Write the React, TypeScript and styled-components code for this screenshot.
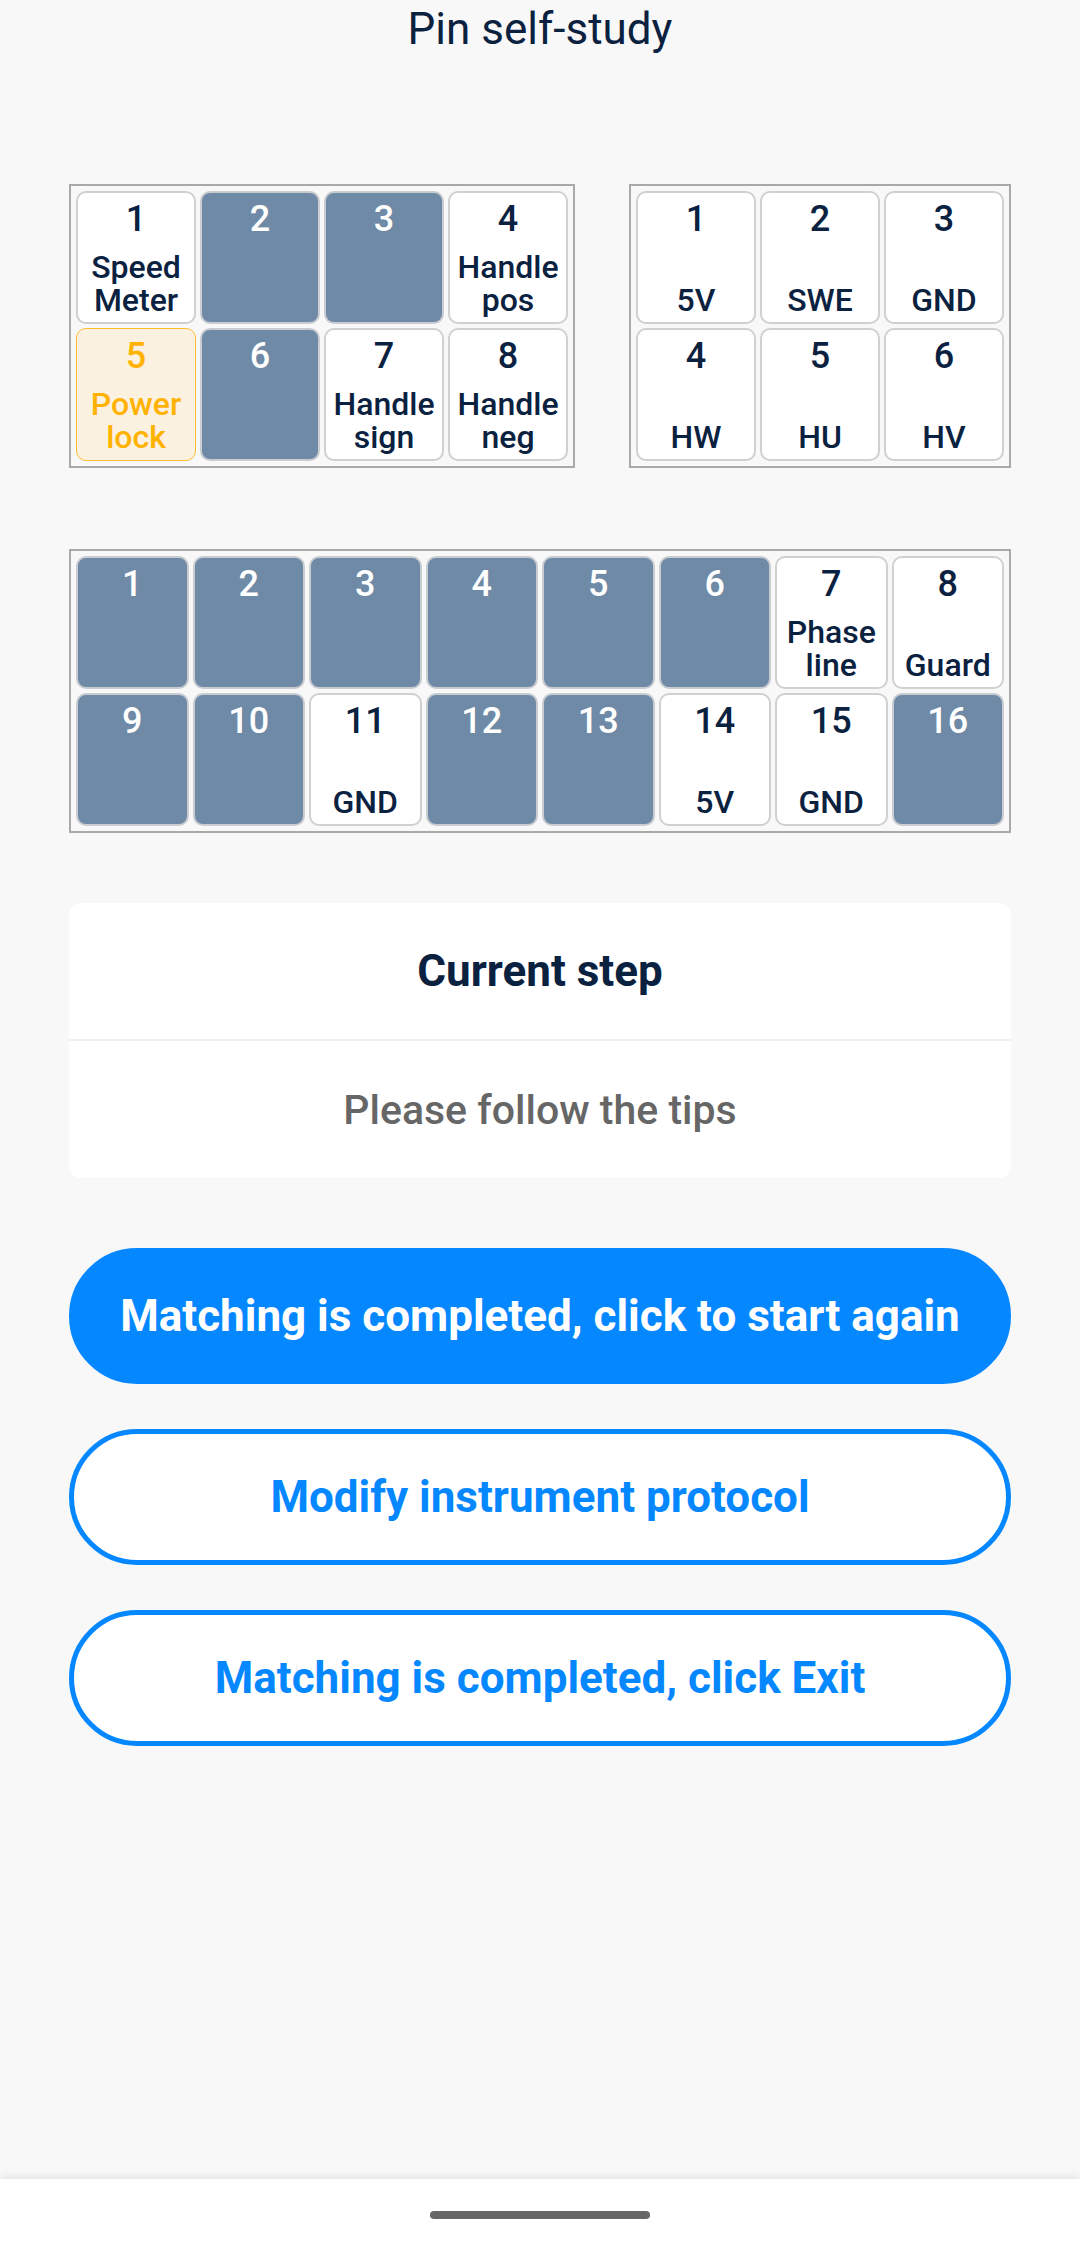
import React from "react";
import styled, { createGlobalStyle, css } from "styled-components";

const GlobalStyle = createGlobalStyle`
  html, body {
    margin: 0;
    padding: 0;
    background: #f8f8f8;
  }
  body {
    font-family: Roboto, "Noto Sans", "Liberation Sans", sans-serif;
    -webkit-font-smoothing: antialiased;
  }
  * { box-sizing: border-box; }
`;

const NAVY = "#0b2140";
const BLUE = "#0588ff";

type PinState = "normal" | "off" | "active";

interface Pin {
  n: number;
  label?: string;
  state?: PinState;
}

const Page = styled.div`
  min-height: 100vh;
  display: flex;
  flex-direction: column;
  background: #f8f8f8;
  color: ${NAVY};
`;

const Title = styled.h1`
  margin: 0;
  height: 58px;
  line-height: 58px;
  text-align: center;
  font-size: 44px;
  font-weight: 400;
  color: ${NAVY};
`;

const Content = styled.main`
  padding: 0 69px;
  margin-top: 126px;
  display: flex;
  flex-direction: column;
`;

const TopRow = styled.div`
  display: flex;
  justify-content: space-between;
  align-items: flex-start;
`;

const PinBox = styled.div<{ $cols: number; $fixed?: boolean }>`
  display: grid;
  grid-template-columns: ${(p) =>
    p.$fixed ? `repeat(${p.$cols}, 120px)` : `repeat(${p.$cols}, 1fr)`};
  grid-auto-rows: 133px;
  gap: 4px;
  padding: 5px;
  border: 2px solid #a9a9a9;
  background: #f8f8f8;
  ${(p) => (p.$fixed ? "width: max-content;" : "width: 100%;")}
`;

const WideBox = styled(PinBox)`
  margin-top: 81px;
`;

const Cell = styled.div<{ $state: PinState }>`
  display: flex;
  flex-direction: column;
  justify-content: space-between;
  align-items: center;
  padding: 6px 2px 5px;
  border-radius: 10px;
  border: 2px solid #d0d0d0;
  background: #ffffff;
  color: ${NAVY};
  text-align: center;
  overflow: hidden;
  ${(p) =>
    p.$state === "off" &&
    css`
      background: #6f8aa6;
      border-color: #c9cdd2;
      color: #ffffff;
    `}
  ${(p) =>
    p.$state === "active" &&
    css`
      background: #faf1e1;
      border-color: #ffbd2e;
      border-width: 1px;
      padding: 7px 3px 6px;
      color: #ffb300;
    `}
`;

const PinNumber = styled.div`
  font-size: 36px;
  line-height: 40px;
  font-weight: 500;
`;

const PinLabel = styled.div`
  font-size: 32px;
  line-height: 33px;
  font-weight: 500;
`;

const StepCard = styled.section`
  margin-top: 70px;
  background: #ffffff;
  border-radius: 12px;
  display: flex;
  flex-direction: column;
`;

const StepHeader = styled.div`
  height: 138px;
  display: flex;
  align-items: center;
  justify-content: center;
  font-size: 44px;
  font-weight: 700;
  color: ${NAVY};
  border-bottom: 2px solid #f0f0f0;
`;

const StepBody = styled.div`
  height: 137px;
  display: flex;
  align-items: center;
  justify-content: center;
  font-size: 41px;
  font-weight: 500;
  color: #666666;
`;

const Buttons = styled.div`
  margin-top: 70px;
  display: flex;
  flex-direction: column;
  gap: 45px;
`;

const PillButton = styled.button<{ $primary?: boolean }>`
  height: 136px;
  width: 100%;
  border-radius: 68px;
  font-family: inherit;
  font-size: 44px;
  font-weight: 700;
  cursor: pointer;
  display: flex;
  align-items: center;
  justify-content: center;
  border: 5px solid ${BLUE};
  background: ${(p) => (p.$primary ? BLUE : "#ffffff")};
  color: ${(p) => (p.$primary ? "#ffffff" : BLUE)};
`;

const Spacer = styled.div`
  flex: 1;
`;

const NavBar = styled.footer`
  height: 71px;
  background: #ffffff;
  box-shadow: 0 -3px 8px rgba(0, 0, 0, 0.08);
  display: flex;
  align-items: center;
  justify-content: center;
`;

const HomeIndicator = styled.div`
  width: 220px;
  height: 8px;
  border-radius: 4px;
  background: #666666;
`;

const box1: Pin[] = [
  { n: 1, label: "Speed Meter" },
  { n: 2, state: "off" },
  { n: 3, state: "off" },
  { n: 4, label: "Handle pos" },
  { n: 5, label: "Power lock", state: "active" },
  { n: 6, state: "off" },
  { n: 7, label: "Handle sign" },
  { n: 8, label: "Handle neg" },
];

const box2: Pin[] = [
  { n: 1, label: "5V" },
  { n: 2, label: "SWE" },
  { n: 3, label: "GND" },
  { n: 4, label: "HW" },
  { n: 5, label: "HU" },
  { n: 6, label: "HV" },
];

const box3: Pin[] = [
  { n: 1, state: "off" },
  { n: 2, state: "off" },
  { n: 3, state: "off" },
  { n: 4, state: "off" },
  { n: 5, state: "off" },
  { n: 6, state: "off" },
  { n: 7, label: "Phase line" },
  { n: 8, label: "Guard" },
  { n: 9, state: "off" },
  { n: 10, state: "off" },
  { n: 11, label: "GND" },
  { n: 12, state: "off" },
  { n: 13, state: "off" },
  { n: 14, label: "5V" },
  { n: 15, label: "GND" },
  { n: 16, state: "off" },
];

const PinCell: React.FC<{ pin: Pin }> = ({ pin }) => (
  <Cell $state={pin.state ?? "normal"}>
    <PinNumber>{pin.n}</PinNumber>
    {pin.label && <PinLabel>{pin.label}</PinLabel>}
  </Cell>
);

export default function App() {
  return (
    <>
      <GlobalStyle />
      <Page>
        <Title>Pin self-study</Title>
        <Content>
          <TopRow>
            <PinBox $cols={4} $fixed>
              {box1.map((p) => (
                <PinCell key={p.n} pin={p} />
              ))}
            </PinBox>
            <PinBox $cols={3} $fixed>
              {box2.map((p) => (
                <PinCell key={p.n} pin={p} />
              ))}
            </PinBox>
          </TopRow>
          <WideBox $cols={8}>
            {box3.map((p) => (
              <PinCell key={p.n} pin={p} />
            ))}
          </WideBox>
          <StepCard>
            <StepHeader>Current step</StepHeader>
            <StepBody>Please follow the tips</StepBody>
          </StepCard>
          <Buttons>
            <PillButton $primary>Matching is completed, click to start again</PillButton>
            <PillButton>Modify instrument protocol</PillButton>
            <PillButton>Matching is completed, click Exit</PillButton>
          </Buttons>
        </Content>
        <Spacer />
        <NavBar>
          <HomeIndicator />
        </NavBar>
      </Page>
    </>
  );
}
